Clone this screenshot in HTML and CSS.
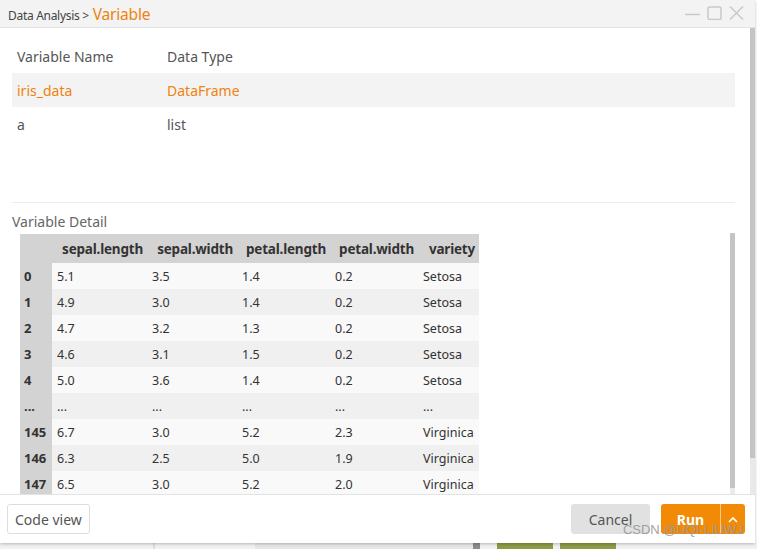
FILE: index.html
```html
<!DOCTYPE html>
<html lang="en">
<head>
    <meta charset="UTF-8">
    <title>Variable</title>
    <link rel="stylesheet" href="styles.css">
</head>
<body>
    <div class="dialog">
        <div class="titlebar">
            <div class="crumbs"><span class="crumb">Data Analysis &gt;</span> <span class="crumb-current">Variable</span></div>
            <div class="win-btns">
                <svg width="15" height="14" viewBox="0 0 15 14"><line x1="0" y1="8.5" x2="15" y2="8.5" stroke="#c9c9c9" stroke-width="1.5"/></svg>
                <svg width="15" height="14" viewBox="0 0 15 14"><rect x="1" y="1" width="13" height="12.5" rx="1.5" fill="none" stroke="#c9c9c9" stroke-width="1.5"/></svg>
                <svg width="15" height="14" viewBox="0 0 15 14"><path d="M1 0.5 L14 13.5 M14 0.5 L1 13.5" stroke="#c9c9c9" stroke-width="1.5"/></svg>
            </div>
        </div>

        <div class="content">
            <div class="main">
                <table class="var-table">
                    <tr><th>Variable Name</th><th>Data Type</th></tr>
                    <tr class="selected"><td>iris_data</td><td>DataFrame</td></tr>
                    <tr><td>a</td><td>list</td></tr>
                </table>
                <div class="divider"></div>
                <div class="detail-label">Variable Detail</div>
                <div class="detail-box">
                    <div class="detail-scroll">
                        <table class="df">
                            <colgroup>
                                <col style="width:32px"><col style="width:95px"><col style="width:90px"><col style="width:93px"><col style="width:88px"><col style="width:61px">
                            </colgroup>
                            <tr><th></th><th>sepal.length</th><th>sepal.width</th><th>petal.length</th><th>petal.width</th><th>variety</th></tr>
                            <tr><th>0</th><td>5.1</td><td>3.5</td><td>1.4</td><td>0.2</td><td>Setosa</td></tr>
                            <tr><th>1</th><td>4.9</td><td>3.0</td><td>1.4</td><td>0.2</td><td>Setosa</td></tr>
                            <tr><th>2</th><td>4.7</td><td>3.2</td><td>1.3</td><td>0.2</td><td>Setosa</td></tr>
                            <tr><th>3</th><td>4.6</td><td>3.1</td><td>1.5</td><td>0.2</td><td>Setosa</td></tr>
                            <tr><th>4</th><td>5.0</td><td>3.6</td><td>1.4</td><td>0.2</td><td>Setosa</td></tr>
                            <tr><th>...</th><td>...</td><td>...</td><td>...</td><td>...</td><td>...</td></tr>
                            <tr><th>145</th><td>6.7</td><td>3.0</td><td>5.2</td><td>2.3</td><td>Virginica</td></tr>
                            <tr><th>146</th><td>6.3</td><td>2.5</td><td>5.0</td><td>1.9</td><td>Virginica</td></tr>
                            <tr><th>147</th><td>6.5</td><td>3.0</td><td>5.2</td><td>2.0</td><td>Virginica</td></tr>
                        </table>
                    </div>
                    <div class="inner-bar"><div class="inner-thumb"></div></div>
                </div>
            </div>
            <div class="outer-bar"><div class="outer-thumb"></div></div>
        </div>

        <div class="footer">
            <button class="btn-code">Code view</button>
            <div class="footer-right">
                <button class="btn-cancel">Cancel</button>
                <div class="btn-run">
                    <span class="run-label">Run</span>
                    <span class="run-arrow">
                        <svg width="10" height="7" viewBox="0 0 10 7"><path d="M1 6 L5 2 L9 6" fill="none" stroke="#fff" stroke-width="1.6"/></svg>
                    </span>
                </div>
            </div>
            <span class="watermark">CSDN @UQI-LIUWJ</span>
        </div>
    </div>
    <div class="under">
        <div class="under-a"></div>
        <div class="under-b"></div>
        <div class="under-c"></div>
        <div class="under-d"></div>
        <div class="under-green"></div>
        <div class="under-green2"></div>
    </div>
</body>
</html>
```

FILE: styles.css
```css
body{
  margin:0;
  background:#fff;
  font-family:"Noto Sans","Open Sans",sans-serif;
  width:757px;
  height:549px;
  overflow:hidden;
  position:relative;
}
.dialog{
  width:755px;
  height:543px;
  display:flex;
  flex-direction:column;
  background:#fff;
  box-shadow:0 1px 3px rgba(0,0,0,0.25);
  position:relative;
  z-index:2;
}
.titlebar{
  height:27px;
  flex:none;
  background:#f3f3f3;
  border-bottom:1px solid #e2e2e2;
  display:flex;
  align-items:center;
  justify-content:space-between;
  padding:0 11px 0 8px;
}
.crumbs{
  display:flex;
  align-items:baseline;
  gap:4px;
}
.crumb{
  font-size:12px;
  color:#444;
  letter-spacing:-0.3px;
}
.crumb-current{
  font-size:15.5px;
  color:#f0820f;
  letter-spacing:-0.2px;
}
.win-btns{
  display:flex;
  gap:7px;
  margin-top:-2px;
}
.content{
  flex:1;
  display:flex;
  min-height:0;
}
.main{
  flex:1;
  padding:0 15px 0 12px;
  display:flex;
  flex-direction:column;
  min-height:0;
}
.var-table{
  border-collapse:collapse;
  width:100%;
  margin-top:12px;
  font-size:14px;
  color:#555;
}
.var-table th{
  font-weight:normal;
  text-align:left;
  height:33px;
  padding:0 5px;
}
.var-table td{
  height:34px;
  padding:0 5px;
}
.var-table th:first-child, .var-table td:first-child{
  width:140px;
}
.var-table tr.selected{
  background:#f3f3f3;
  color:#f0820f;
}
.divider{
  margin-top:61px;
  border-top:1px solid #ececec;
}
.detail-label{
  font-size:14px;
  color:#666;
  margin-top:9px;
  line-height:19px;
}
.detail-box{
  flex:1;
  display:flex;
  min-height:0;
  margin-top:3px;
}
.detail-scroll{
  flex:1;
  overflow:hidden;
  padding-left:8px;
}
.df{
  border-collapse:collapse;
  table-layout:fixed;
  width:459px;
  font-size:12.5px;
  color:#333;
}
.df tr:first-child th{
  background:#d3d3d3;
  font-size:13.5px;
  font-weight:bold;
  text-align:right;
  height:29px;
  padding:0 4px;
  white-space:nowrap;
  letter-spacing:-0.2px;
}
.df th{
  background:#d3d3d3;
  text-align:left;
  padding:0 4px;
  font-size:13px;
  font-weight:bold;
  height:26px;
}
.df td{
  padding:0 5px;
  height:26px;
  white-space:nowrap;
}
.df tr:nth-child(even) td{
  background:#f9f9f9;
}
.df tr:nth-child(odd) td{
  background:#f0f0f0;
}
.inner-bar{
  width:5px;
  background:#ebebeb;
  margin-left:8px;
  margin-top:-1px;
  display:flex;
  flex-direction:column;
}
.inner-thumb{
  height:255px;
  background:#c4c4c4;
}
.outer-bar{
  width:5px;
  background:#e9e9e9;
  display:flex;
  flex-direction:column;
}
.outer-thumb{
  height:430px;
  background:#c4c4c4;
}
.footer{
  height:48px;
  flex:none;
  border-top:1px solid #e3e3e3;
  display:flex;
  align-items:center;
  justify-content:space-between;
  padding:0 10px 0 7px;
  position:relative;
}
button{
  font-family:inherit;
  font-size:14px;
  cursor:pointer;
}
.btn-code{
  height:30px;
  padding:0 7px;
  background:#fff;
  border:1px solid #ddd;
  border-radius:3px;
  color:#555;
}
.footer-right{
  display:flex;
  gap:11px;
}
.btn-cancel{
  width:79px;
  height:30px;
  background:#e1e1e1;
  border:none;
  border-radius:3px;
  color:#555;
}
.btn-run{
  display:flex;
  height:30px;
  background:#f28a06;
  border-radius:3px;
  color:#fff;
  font-size:14px;
  font-weight:bold;
}
.run-label{
  width:59px;
  display:flex;
  align-items:center;
  justify-content:center;
  border-right:1px solid #fbc98c;
}
.run-arrow{
  width:24px;
  display:flex;
  align-items:center;
  justify-content:center;
}
.watermark{
  position:absolute;
  right:12px;
  bottom:6px;
  font-family:"Liberation Sans",sans-serif;
  font-size:13px;
  color:#9a9a9a;
  opacity:0.9;
}
.under{
  display:flex;
  height:6px;
  background:#f1f1f1;
}
.under-a{ width:153px; border-right:2px solid #ddd; }
.under-b{ width:100px; border-right:1px solid #e6e6e6; }
.under-c{ width:217px; background:#e6e6e6; }
.under-d{ width:7px; background:#8c8c8c; margin-right:17px; }
.under-green{ width:56px; background:#8c9b44; margin-right:7px; }
.under-green2{ width:56px; background:#8c9b44; }
```
